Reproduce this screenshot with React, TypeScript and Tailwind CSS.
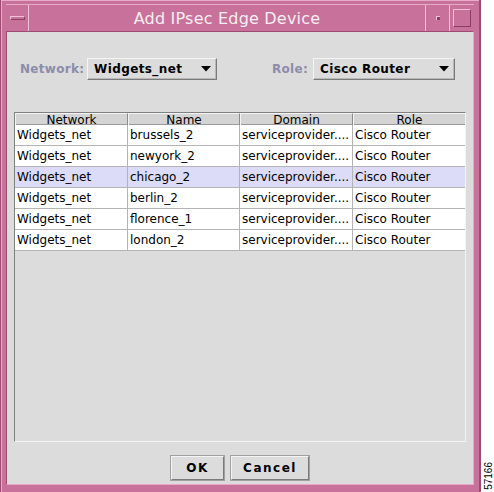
const rows = [
  { network: "Widgets_net", name: "brussels_2", domain: "serviceprovider....", role: "Cisco Router" },
  { network: "Widgets_net", name: "newyork_2", domain: "serviceprovider....", role: "Cisco Router" },
  { network: "Widgets_net", name: "chicago_2", domain: "serviceprovider....", role: "Cisco Router", selected: true },
  { network: "Widgets_net", name: "berlin_2", domain: "serviceprovider....", role: "Cisco Router" },
  { network: "Widgets_net", name: "florence_1", domain: "serviceprovider....", role: "Cisco Router" },
  { network: "Widgets_net", name: "london_2", domain: "serviceprovider....", role: "Cisco Router" },
];

const Combo = ({ value, width }: { value: string; width: string }) => (
  <div
    className={`${width} h-[22px] flex items-center justify-between pl-[6px] pr-[5px] bg-[#dcdcdc] border border-t-[#f4f4f4] border-l-[#f4f4f4] border-r-[#7a7a7a] border-b-[#7a7a7a] shadow-[inset_-1px_-1px_0_#b8b8b8]`}
  >
    <span className="text-[12px] font-bold text-black tracking-[0.4px]">{value}</span>
    <svg width="10" height="6" viewBox="0 0 10 6">
      <polygon points="0,0 10,0 5,5.5" fill="#000" />
    </svg>
  </div>
);

const Cell = ({ children, last }: { children: React.ReactNode; last?: boolean }) => (
  <div className={`pl-[2px] flex items-center overflow-hidden whitespace-nowrap ${last ? "" : "border-r border-[#b4b4b4]"}`}>
    {children}
  </div>
);

export default function App() {
  return (
    <div className="w-[494px] h-[492px] bg-white flex font-['DejaVu_Sans',sans-serif]">
      <div className="w-[482px] h-[492px] flex flex-col bg-[#c8729b] border-l border-r-2 border-[#9c4c70] pt-[4px] px-[5px] pb-[7px] shadow-[inset_1px_1px_0_#e8aac8]">
        {/* title bar */}
        <div className="h-[27px] flex border-t border-[#e8aac8]">
          <div className="w-[23px] flex items-center justify-center border-r border-[#f0c0d6]">
            <div className="w-[15px] h-[4px] border border-[#8a3e62] border-t-[#f0c0d6] border-l-[#f0c0d6]" />
          </div>
          <div className="flex-1 flex items-center justify-center pt-[2px] text-[#f6eef2] text-[16px] tracking-[0.2px] border-r border-[#f0c0d6]">
            Add IPsec Edge Device
          </div>
          <div className="w-[24px] flex items-center justify-center border-r border-[#f0c0d6]">
            <div className="w-[4px] h-[4px] bg-[#8a3e62] border-t border-l border-[#f0c0d6]" />
          </div>
          <div className="w-[24px] flex items-center justify-center">
            <div className="w-[18px] h-[18px] border border-[#f0c0d6] border-r-[#8a3e62] border-b-[#8a3e62]" />
          </div>
        </div>

        {/* content */}
        <div className="flex-1 bg-[#dcdcdc] flex flex-col px-[7px] border border-[#9c4c70] border-r-[#e8aac8] border-b-[#e8aac8]">
          <div className="flex items-center mt-[26px] h-[22px]">
            <span className="ml-[6px] text-[12px] font-bold text-[#8c8cab] tracking-[0.3px] w-[67px]">Network:</span>
            <Combo value="Widgets_net" width="w-[130px]" />
            <span className="ml-[55px] text-[12px] font-bold text-[#8c8cab] tracking-[0.3px] w-[41px]">Role:</span>
            <Combo value="Cisco Router" width="w-[142px]" />
          </div>

          <div className="mt-[32px] h-[330px] w-[452px] border border-[#808080] border-r-[#f4f4f4] border-b-[#f4f4f4] bg-[#dcdcdc] flex flex-col">
            <div className="grid grid-cols-[113px_112px_113px_1fr] h-[12px] bg-[#d4d4d4] text-[12px] leading-[12px] text-black border-b border-[#9a9a9a]">
              {["Network", "Name", "Domain", "Role"].map((h, i) => (
                <div
                  key={h}
                  className={`flex items-center justify-center border-t border-l border-[#f4f4f4] ${i < 3 ? "border-r border-r-[#8a8a8a]" : ""}`}
                >
                  {h}
                </div>
              ))}
            </div>
            {rows.map((r) => (
              <div
                key={r.name}
                className={`grid grid-cols-[113px_112px_113px_1fr] h-[21px] text-[12px] text-black border-b border-[#b4b4b4] ${r.selected ? "bg-[#dcdcf8]" : "bg-white"}`}
              >
                <Cell>{r.network}</Cell>
                <Cell>{r.name}</Cell>
                <Cell>{r.domain}</Cell>
                <Cell last>{r.role}</Cell>
              </div>
            ))}
          </div>

          <div className="flex justify-center gap-[7px] mt-[14px]">
            <button className="w-[53px] h-[24px] text-[12px] font-bold tracking-[1.5px] text-black bg-[#dcdcdc] border border-t-[#f4f4f4] border-l-[#f4f4f4] border-r-[#7a7a7a] border-b-[#7a7a7a] outline outline-1 outline-[#a0a0a0]">
              OK
            </button>
            <button className="w-[78px] h-[24px] text-[12px] font-bold tracking-[1.5px] text-black bg-[#dcdcdc] border border-t-[#f4f4f4] border-l-[#f4f4f4] border-r-[#7a7a7a] border-b-[#7a7a7a] outline outline-1 outline-[#a0a0a0]">
              Cancel
            </button>
          </div>
        </div>
      </div>
      <div className="flex-1 flex flex-col justify-end items-center pb-[2px]">
        <span className="text-[10px] text-black [writing-mode:vertical-rl] rotate-180 font-['Liberation_Sans',sans-serif]">
          57166
        </span>
      </div>
    </div>
  );
}
